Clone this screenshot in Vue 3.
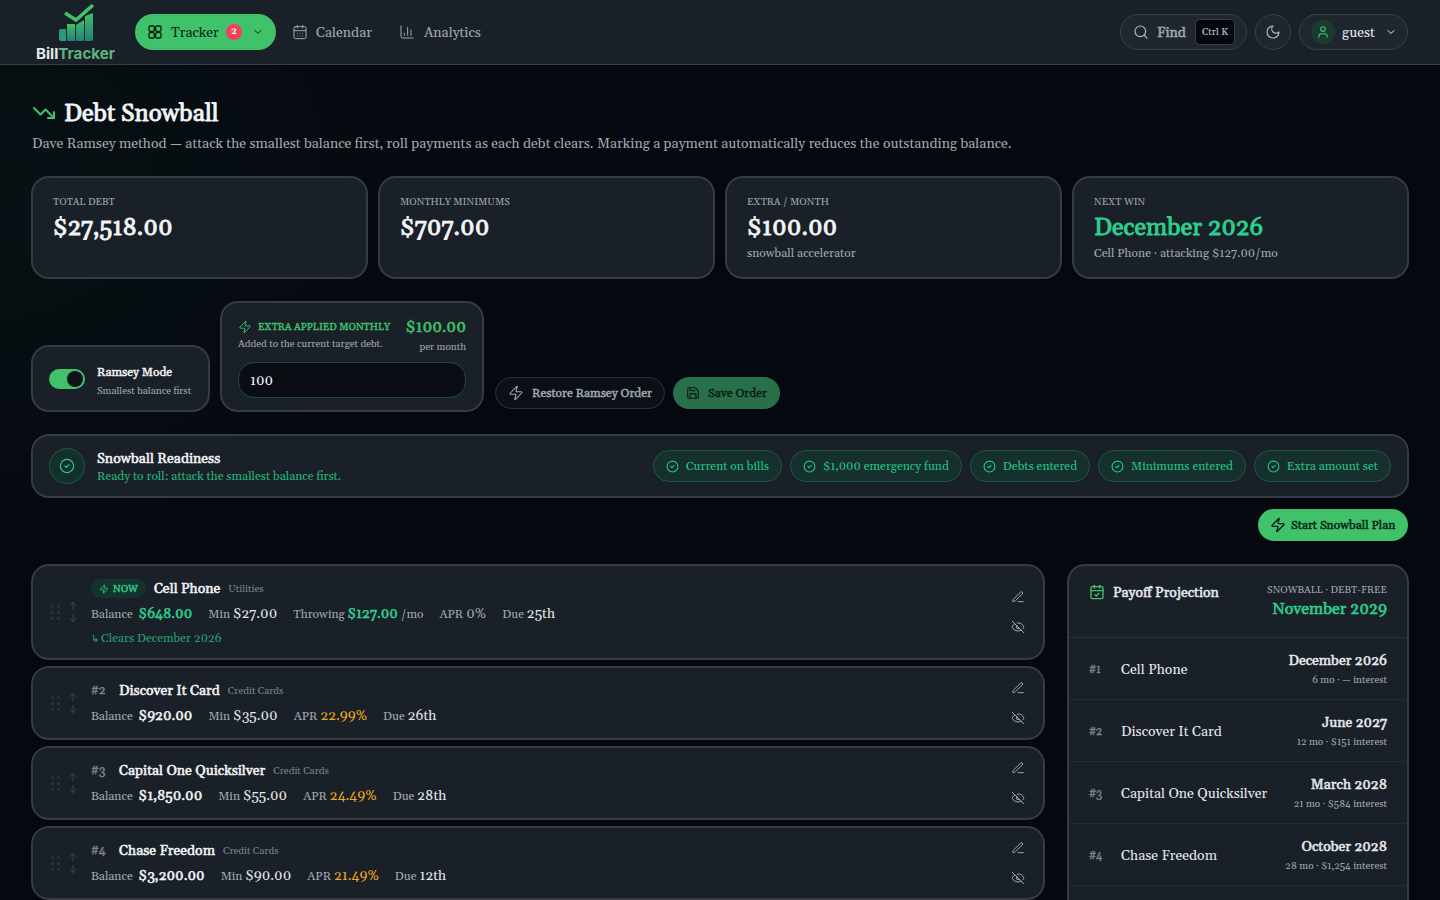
<script setup>
import { h } from 'vue'

const ic = {
  grid: ['M5 3h4a2 2 0 0 1 2 2v4a2 2 0 0 1-2 2H5a2 2 0 0 1-2-2V5a2 2 0 0 1 2-2z','M15 3h4a2 2 0 0 1 2 2v4a2 2 0 0 1-2 2h-4a2 2 0 0 1-2-2V5a2 2 0 0 1 2-2z','M5 13h4a2 2 0 0 1 2 2v4a2 2 0 0 1-2 2H5a2 2 0 0 1-2-2v-4a2 2 0 0 1 2-2z','M15 13h4a2 2 0 0 1 2 2v4a2 2 0 0 1-2 2h-4a2 2 0 0 1-2-2v-4a2 2 0 0 1 2-2z'],
  chev: ['m6 9 6 6 6-6'],
  cal: ['M8 2v4','M16 2v4','M5 4h14a2 2 0 0 1 2 2v14a2 2 0 0 1-2 2H5a2 2 0 0 1-2-2V6a2 2 0 0 1 2-2z','M3 10h18','M8 14h.01','M12 14h.01','M16 14h.01','M8 18h.01','M12 18h.01','M16 18h.01'],
  chart: ['M3 3v16a2 2 0 0 0 2 2h16','M18 17V9','M13 17V5','M8 17v-3'],
  search: ['m21 21-4.34-4.34','M11 3a8 8 0 1 0 0 16 8 8 0 0 0 0-16z'],
  moon: ['M12 3a6 6 0 0 0 9 9 9 9 0 1 1-9-9Z'],
  user: ['M19 21v-2a4 4 0 0 0-4-4H9a4 4 0 0 0-4 4v2','M12 3a4 4 0 1 0 0 8 4 4 0 0 0 0-8z'],
  down: ['M16 17h6v-6','m22 17-8.5-8.5-5 5L2 7'],
  zap: ['M4 14a1 1 0 0 1-.78-1.63l9.9-10.2a.5.5 0 0 1 .86.46l-1.92 6.02A1 1 0 0 0 13 10h7a1 1 0 0 1 .78 1.63l-9.9 10.2a.5.5 0 0 1-.86-.46l1.92-6.02A1 1 0 0 0 11 14z'],
  save: ['M15.2 3a2 2 0 0 1 1.4.6l3.8 3.8a2 2 0 0 1 .6 1.4V19a2 2 0 0 1-2 2H5a2 2 0 0 1-2-2V5a2 2 0 0 1 2-2z','M17 21v-7a1 1 0 0 0-1-1H8a1 1 0 0 0-1 1v7','M7 3v4a1 1 0 0 0 1 1h7'],
  check: ['M12 2a10 10 0 1 0 0 20 10 10 0 0 0 0-20z','m9 12 2 2 4-4'],
  pen: ['M12 20h9','M16.376 3.622a1 1 0 0 1 3.002 3.002L7.368 18.635a2 2 0 0 1-.855.506l-2.872.838a.5.5 0 0 1-.62-.62l.838-2.872a2 2 0 0 1 .506-.854z'],
  eye: ['M10.733 5.076a10.744 10.744 0 0 1 11.205 6.575 1 1 0 0 1 0 .696 10.747 10.747 0 0 1-1.444 2.49','M14.084 14.158a3 3 0 0 1-4.242-4.242','M17.479 17.499a10.75 10.75 0 0 1-15.417-5.151 1 1 0 0 1 0-.696 10.75 10.75 0 0 1 4.446-5.143','m2 2 20 20'],
  calcheck: ['M8 2v4','M16 2v4','M5 4h14a2 2 0 0 1 2 2v14a2 2 0 0 1-2 2H5a2 2 0 0 1-2-2V6a2 2 0 0 1 2-2z','M3 10h18','m9 16 2 2 4-4'],
  up: ['m5 12 7-7 7 7','M12 19V5'],
  dn: ['M12 5v14','m19 12-7 7-7-7'],
}
const Icon = (props) => h('svg', { viewBox: '0 0 24 24', fill: 'none', stroke: 'currentColor', 'stroke-width': props.w || 2, 'stroke-linecap': 'round', 'stroke-linejoin': 'round' }, ic[props.n].map(d => h('path', { d })))
Icon.props = ['n', 'w']

const stats = [
  { label: 'TOTAL DEBT', value: '$27,518.00' },
  { label: 'MONTHLY MINIMUMS', value: '$707.00' },
  { label: 'EXTRA / MONTH', value: '$100.00', sub: 'snowball accelerator' },
  { label: 'NEXT WIN', value: 'December 2026', sub: 'Cell Phone · attacking $127.00/mo', green: true },
]
const chips = ['Current on bills', '$1,000 emergency fund', 'Debts entered', 'Minimums entered', 'Extra amount set']
const debts = [
  { n: '#2', title: 'Discover It Card', cat: 'Credit Cards', bal: '$920.00', min: '$35.00', apr: '22.99%', due: '26th' },
  { n: '#3', title: 'Capital One Quicksilver', cat: 'Credit Cards', bal: '$1,850.00', min: '$55.00', apr: '24.49%', due: '28th' },
  { n: '#4', title: 'Chase Freedom', cat: 'Credit Cards', bal: '$3,200.00', min: '$90.00', apr: '21.49%', due: '12th' },
]
const proj = [
  { n: '#1', name: 'Cell Phone', date: 'December 2026', sub: '6 mo · — interest' },
  { n: '#2', name: 'Discover It Card', date: 'June 2027', sub: '12 mo · $151 interest' },
  { n: '#3', name: 'Capital One Quicksilver', date: 'March 2028', sub: '21 mo · $584 interest' },
  { n: '#4', name: 'Chase Freedom', date: 'October 2028', sub: '28 mo · $1,254 interest' },
]
</script>

<template>
  <div class="app">
    <header class="nav">
      <div class="logo">
        <svg class="logo-mark" viewBox="0 0 36 38" fill="none">
          <defs>
            <linearGradient id="lg" x1="0" y1="0" x2="0" y2="1">
              <stop offset="0" stop-color="#3fc26a" />
              <stop offset="1" stop-color="#1f7f78" />
            </linearGradient>
          </defs>
          <path d="M1 28q0-2 2-2h5v12H3q-2 0-2-2z" fill="#2a9a78" />
          <path d="M9 21h8v17H9z" fill="url(#lg)" />
          <path d="M18 22l8-5v21h-8z" fill="url(#lg)" />
          <path d="M27 13l8-3v26q0 2-2 2h-6z" fill="url(#lg)" />
          <path d="M7 10l11 7L35 2" stroke="#3fc26a" stroke-width="3.600" />
        </svg>
        <div class="logo-text">Bill<span>Tracker</span></div>
      </div>
      <div class="active">
        <Icon n="grid" class="i16" />
        <span class="tr nudge">Tracker</span>
        <b class="badge">2</b>
        <Icon n="chev" class="i12 chev" />
      </div>
      <div class="link"><Icon n="cal" class="i16" w="1.5" /><span class="nudge">Calendar</span></div>
      <div class="link"><Icon n="chart" class="i16" w="1.5" /><span class="nudge">Analytics</span></div>
      <div class="spacer"></div>
      <div class="find">
        <Icon n="search" class="i16" w="1.7" />
        <span class="find-t nudge">Find</span>
        <kbd>Ctrl K</kbd>
      </div>
      <div class="moon"><Icon n="moon" class="i16" w="1.7" /></div>
      <div class="guest">
        <span class="ava"><Icon n="user" class="i14" /></span>
        <span class="guest-t nudge">guest</span>
        <Icon n="chev" class="i12" />
      </div>
    </header>

    <main class="page">
      <h1 class="title"><Icon n="down" class="trend" /><span class="nudge">Debt Snowball</span></h1>
      <p class="tagline nudge">Dave Ramsey method — attack the smallest balance first, roll payments as each debt clears. Marking a payment automatically reduces the outstanding balance.</p>

      <section class="stats">
        <div v-for="s in stats" :key="s.label" class="card stat">
          <div class="s-label nudge">{{ s.label }}</div>
          <div class="s-value nudge" :class="{ green: s.green }">{{ s.value }}</div>
          <div v-if="s.sub" class="s-sub nudge">{{ s.sub }}</div>
        </div>
      </section>

      <section class="controls">
        <div class="card ramsey">
          <span class="toggle"><i></i></span>
          <div class="r-txt">
            <div class="r-t">Ramsey Mode</div>
            <div class="r-s">Smallest balance first</div>
          </div>
        </div>
        <div class="card extra">
          <div class="ex-top">
            <div>
              <div class="ex-h"><Icon n="zap" class="i14" w="1.6" />EXTRA APPLIED MONTHLY</div>
              <div class="ex-s nudge">Added to the current target debt.</div>
            </div>
            <div class="ex-r">
              <div class="ex-v">$100.00</div>
              <div class="ex-p nudge">per month</div>
            </div>
          </div>
          <div class="input"><span class="nudge">100</span></div>
        </div>
        <div class="btn ghost"><Icon n="zap" class="i16" w="1.6" />Restore Ramsey Order</div>
        <div class="btn save"><Icon n="save" class="i14" />Save Order</div>
      </section>

      <section class="card ready">
        <span class="ready-ic"><Icon n="check" class="i16" w="1.7" /></span>
        <div class="ready-txt">
          <div class="ready-t nudge">Snowball Readiness</div>
          <div class="ready-s nudge">Ready to roll: attack the smallest balance first.</div>
        </div>
        <div class="chips">
          <span v-for="c in chips" :key="c" class="chip"><Icon n="check" class="i13" />{{ c }}</span>
        </div>
      </section>

      <div class="start-row">
        <div class="btn start"><Icon n="zap" class="i16" />Start Snowball Plan</div>
      </div>

      <section class="split">
        <div class="list">
          <article class="card debt">
            <div class="handles">
              <span class="grip"><i v-for="k in 6" :key="k"></i></span>
              <span class="arrows"><Icon n="up" class="i12" /><Icon n="dn" class="i12" /></span>
            </div>
            <div class="d-body">
              <div class="d-head">
                <span class="now"><Icon n="zap" class="i10" />NOW</span>
                <span class="d-name">Cell Phone</span>
                <span class="d-cat">Utilities</span>
              </div>
              <div class="d-meta">
                <span class="m">Balance <b class="big mint">$648.00</b></span>
                <span class="m">Min <em>$27.00</em></span>
                <span class="m">Throwing <b class="mint">$127.00</b> /mo</span>
                <span class="m">APR <em class="dim">0%</em></span>
                <span class="m">Due <em>25th</em></span>
              </div>
              <div class="clears"><span class="hook">↳</span>Clears December 2026</div>
            </div>
            <div class="d-act"><Icon n="pen" class="i14" w="1.5" /><Icon n="eye" class="i14" w="1.5" /></div>
          </article>

          <article v-for="d in debts" :key="d.n" class="card debt">
            <div class="handles">
              <span class="grip"><i v-for="k in 6" :key="k"></i></span>
              <span class="arrows"><Icon n="up" class="i12" /><Icon n="dn" class="i12" /></span>
            </div>
            <div class="d-body">
              <div class="d-head">
                <span class="d-n">{{ d.n }}</span>
                <span class="d-name">{{ d.title }}</span>
                <span class="d-cat">{{ d.cat }}</span>
              </div>
              <div class="d-meta">
                <span class="m">Balance <b class="big">{{ d.bal }}</b></span>
                <span class="m">Min <em>{{ d.min }}</em></span>
                <span class="m">APR <em class="amber">{{ d.apr }}</em></span>
                <span class="m">Due <em>{{ d.due }}</em></span>
              </div>
            </div>
            <div class="d-act"><Icon n="pen" class="i14" w="1.5" /><Icon n="eye" class="i14" w="1.5" /></div>
          </article>
        </div>

        <aside class="card panel">
          <div class="p-head">
            <div class="p-title"><Icon n="calcheck" class="i16 pc" /><span class="nudge">Payoff Projection</span></div>
            <div class="p-right">
              <div class="p-lab">SNOWBALL · DEBT-FREE</div>
              <div class="p-date">November 2029</div>
            </div>
          </div>
          <div v-for="p in proj" :key="p.n" class="p-row">
            <span class="p-n nudge">{{ p.n }}</span>
            <span class="p-name nudge">{{ p.name }}</span>
            <div class="p-end">
              <div class="p-d nudge">{{ p.date }}</div>
              <div class="p-s">{{ p.sub }}</div>
            </div>
          </div>
        </aside>
      </section>
    </main>
  </div>
</template>

<style>
html, body { margin: 0; background: #05090f; }
</style>

<style scoped>
.app {
  height: 900px;
  overflow: hidden;
  font-family: Gelasio, Georgia, "Liberation Serif", serif;
  font-size: 14px;
  font-variant-numeric: oldstyle-nums;
  color: #e6e8ec;
  background:
    radial-gradient(620px 560px at 0 180px, rgba(30, 90, 70, .1), transparent 70%),
    #05090f;
}
/* regular-weight metrics with a thin outline, as in the reference */
.title, .s-value, .r-t, .ex-h, .ex-v, .btn, .ready-t, .d-name, .m b, .now, .p-title, .p-date, .p-d, .find-t, .d-n, .p-n {
  font-weight: 400;
  -webkit-text-stroke: .036em currentColor;
}
/* moves a text line down one pixel without moving what follows it */
.nudge { padding-top: 1px; margin-bottom: -1px; }
svg { display: block; flex: none; -webkit-text-stroke: 0; }
.i10 { width: 10px; height: 10px; }
.i12 { width: 12px; height: 12px; }
.i13 { width: 13px; height: 13px; }
.i14 { width: 14px; height: 14px; }
.i16 { width: 16px; height: 16px; }

.nav {
  height: 65px;
  box-sizing: border-box;
  background: #1a2028;
  border-bottom: 1px solid #3a3f46;
  display: flex;
  align-items: center;
  padding: 0 32px;
}
.logo { width: 87px; margin-right: 16px; display: flex; flex-direction: column; align-items: center; padding-top: 3px; height: 64px; box-sizing: border-box; }
.logo-mark { width: 36px; height: 38px; }
.logo-text { font: 700 15.200px/17px "Inter", "Liberation Sans", sans-serif; color: #e5e7eb; white-space: nowrap; margin-top: 4px; }
.logo-text span { color: #5fb37c; }
.active {
  height: 36px;
  width: 141px;
  box-sizing: border-box;
  padding: 0 12px;
  border-radius: 18px;
  background: #3fc26a;
  color: #0d1d16;
  display: flex;
  align-items: center;
}
.tr { margin-left: 8px; }
.badge {
  width: 16px; height: 16px; border-radius: 50%;
  margin-left: 7px;
  background: #f43f5e; color: #fff;
  font-size: 9px; line-height: 16px; text-align: center;
}
.chev { margin-left: 10px; }
.link {
  display: flex; align-items: center; gap: 8px;
  color: #a3a8b0;
  margin-left: 16px;
}
.link + .link { margin-left: 27px; gap: 9px; }
.spacer { flex: 1; }
.find, .moon, .guest {
  height: 36px; box-sizing: border-box;
  border: 1px solid #3a3f46;
  border-radius: 18px;
  background: #20262e;
  display: flex; align-items: center;
  color: #b5b9c0;
}
.find { width: 127px; padding: 0 12px; gap: 8px; }
.find-t { color: #a3a8b0; }
kbd {
  font-family: inherit; font-size: 10px;
  width: 40px; height: 26px; box-sizing: border-box;
  background: #05090f; border: 1px solid #3a3f46; border-radius: 5px;
  display: flex; align-items: center; justify-content: center;
  color: #c4c7cc;
  margin-left: auto;
  margin-right: -1px;
}
.moon { width: 36px; justify-content: center; margin-left: 8px; }
.guest { width: 109px; margin-left: 8px; padding: 0 10px 0 11px; gap: 7px; color: #e6e8ec; }
.ava { width: 24px; height: 24px; border-radius: 50%; background: #1d3a30; color: #3fc26a; display: flex; align-items: center; justify-content: center; }
.guest-t { flex: 1; }

.page { padding: 32px 32px 0; }
.title {
  margin: 0; display: flex; align-items: center; gap: 8px;
  font-size: 24px; line-height: 32px; color: #f3f4f6;
}
.trend { width: 24px; height: 24px; color: #3fc26a; }
.tagline { margin-top: 4px; margin-left: 0; margin-right: 0; line-height: 20px; color: #a3a8b0; }

.card {
  background: #1a2028;
  border: 1px solid #373c44;
  box-shadow: 0 0 0 1px #373c44;
  border-radius: 17px;
  box-sizing: border-box;
}
.stats { display: grid; grid-template-columns: repeat(4, 1fr); gap: 12px; margin-top: 24px; }
.stat { height: 101px; padding: 16px 20px; }
.s-label { font-size: 10px; line-height: 14px; color: #a3a8b0; }
.s-value { font-size: 24px; line-height: 32px; color: #f3f4f6; margin-top: 3px; }
.s-value.green { color: #2dd08e; }
.s-sub { font-size: 12px; line-height: 16px; color: #a3a8b0; margin-top: 2px; }

.controls { display: flex; align-items: flex-end; gap: 12px; margin-top: 24px; }
.ramsey { width: 177px; height: 65px; display: flex; align-items: center; gap: 12px; padding: 0 16px; flex: none; }
.r-txt { padding-top: 6px; }
.toggle { width: 36px; height: 20px; border-radius: 10px; background: #3fc26a; position: relative; flex: none; }
.toggle i { position: absolute; right: 2px; top: 2px; width: 16px; height: 16px; border-radius: 50%; background: #0d1218; }
.r-t { font-size: 12px; line-height: 16px; color: #f3f4f6; }
.r-s { font-size: 10px; line-height: 14px; color: #a3a8b0; margin-top: 3px; margin-bottom: 1px; white-space: nowrap; }
.extra { width: 262px; height: 109px; padding: 16px 16px 0; flex: none; }
.ex-top { display: flex; justify-content: space-between; height: 35px; }
.ex-h { display: flex; align-items: center; gap: 6px; font-size: 10px; line-height: 16px; color: #3fc26a; white-space: nowrap; }
.ex-s { font-size: 10px; line-height: 14px; color: #a3a8b0; margin-top: 1px; }
.ex-r { text-align: right; }
.ex-v { font-size: 16px; line-height: 16px; color: #3fc26a; }
.ex-p { font-size: 10px; line-height: 14px; color: #a3a8b0; margin-top: 4px; }
.input {
  margin-top: 8px; height: 36px; box-sizing: border-box;
  border: 1px solid #1f4a37; border-radius: 16px;
  background: #0a0e14; color: #f3f4f6;
  display: flex; align-items: center; padding: 0 11px;
}
.btn { display: flex; align-items: center; border-radius: 16px; height: 32px; box-sizing: border-box; white-space: nowrap; font-size: 12px; margin-bottom: 2px; flex: none; }
.ghost { width: 170px; padding: 0 12px; gap: 8px; border: 1px solid #2a2f36; color: #a3a8b0; background: #0b1016; }
.save { width: 107px; padding: 0 13px; gap: 8px; background: #28704a; color: #0d1d16; margin-left: -4px; }

.ready { height: 62px; margin-top: 24px; display: flex; align-items: center; padding: 0 16px; }
.ready-ic { width: 36px; height: 36px; border-radius: 50%; border: 1px solid #1d5a45; background: #14302b; color: #2dd08e; display: flex; align-items: center; justify-content: center; box-sizing: border-box; }
.ready-txt { margin-left: 12px; flex: 1; }
.ready-t { line-height: 20px; color: #f3f4f6; }
.ready-s { font-size: 12px; line-height: 16px; color: #22b77e; }
.chips { display: flex; gap: 8px; }
.chip {
  height: 32px; box-sizing: border-box; padding: 0 12px;
  border: 1px solid #1c5845; border-radius: 16px; background: #15302d; color: #25c486;
  display: flex; align-items: center; gap: 7px; font-size: 12px; white-space: nowrap;
}

.start-row { display: flex; justify-content: flex-end; margin-top: 12px; }
.start { width: 150px; padding: 0 12px; gap: 5px; background: #3fc26a; color: #0d1d16; margin: 0; }

.split { display: flex; gap: 24px; margin-top: 24px; align-items: flex-start; }
.list { flex: 1; display: flex; flex-direction: column; gap: 8px; min-width: 0; }
.debt { display: flex; align-items: stretch; padding: 11px 18px 9px 16px; }
.handles { width: 42px; display: flex; align-items: center; gap: 7px; flex: none; margin-top: -2px; }
.grip { display: grid; grid-template-columns: 3px 3px; gap: 3px; margin-left: 2px; }
.grip i { width: 3px; height: 3px; background: #2d333b; border-radius: 50%; }
.arrows { color: #3f454d; display: flex; flex-direction: column; }
.d-body { flex: 1; min-width: 0; }
.d-head { display: flex; align-items: center; height: 23px; margin-bottom: 1px; }
.d-n { font-size: 12px; color: #7d838c; width: 28px; flex: none; }
.now {
  height: 19px; border-radius: 10px; background: #14332c; color: #2dd08e;
  font-size: 10px; padding: 0 8px; display: flex; align-items: center; gap: 4px; margin-right: 8px;
}
.d-name { color: #f3f4f6; }
.d-cat { font-size: 10px; color: #7d838c; margin-left: 8px; }
.d-meta { display: flex; align-items: baseline; gap: 16px; height: 26px; line-height: 26px; }
.m { font-size: 12px; color: #a3a8b0; white-space: nowrap; }
.m em { font-style: normal; font-size: 14px; color: #e6e8ec; }
.m em.dim { color: #a3a8b0; }
.m em.amber { color: #f0aa1e; }
.m b { font-size: 14px; color: #f3f4f6; }
.m b.big { margin-left: 3px; }
.m b.mint { color: #2dd08e; }
.clears { font-size: 12px; height: 20px; line-height: 20px; color: #23a071; margin-top: 2px; }
.hook { display: inline-block; width: 10px; font-size: 10px; }
.d-act { width: 14px; display: flex; flex-direction: column; align-items: center; justify-content: center; gap: 16px; color: #b5b9c0; margin-top: -2px; }

.panel { width: 340px; flex: none; height: 420px; overflow: hidden; }
.p-head { height: 72px; border-bottom: 1px solid #2b3038; display: flex; justify-content: space-between; padding: 16px 20px 0; box-sizing: border-box; }
.p-title { display: flex; align-items: flex-start; gap: 8px; line-height: 20px; color: #e6e8ec; }
.pc { color: #3fc26a; margin-top: 2px; }
.p-right { text-align: right; padding-top: 1px; }
.p-lab { font-size: 10px; line-height: 14px; color: #a3a8b0; }
.p-date { font-size: 16px; line-height: 24px; color: #2dd08e; }
.p-row { height: 62px; box-sizing: border-box; border-bottom: 1px solid #262b33; display: flex; align-items: center; padding: 0 20px; }
.p-n { width: 32px; font-size: 11px; color: #7d838c; }
.p-name { flex: 1; color: #e6e8ec; }
.p-end { text-align: right; }
.p-d { line-height: 20px; color: #e6e8ec; }
.p-s { font-size: 10px; line-height: 14px; color: #a3a8b0; margin-top: 3px; }
</style>
